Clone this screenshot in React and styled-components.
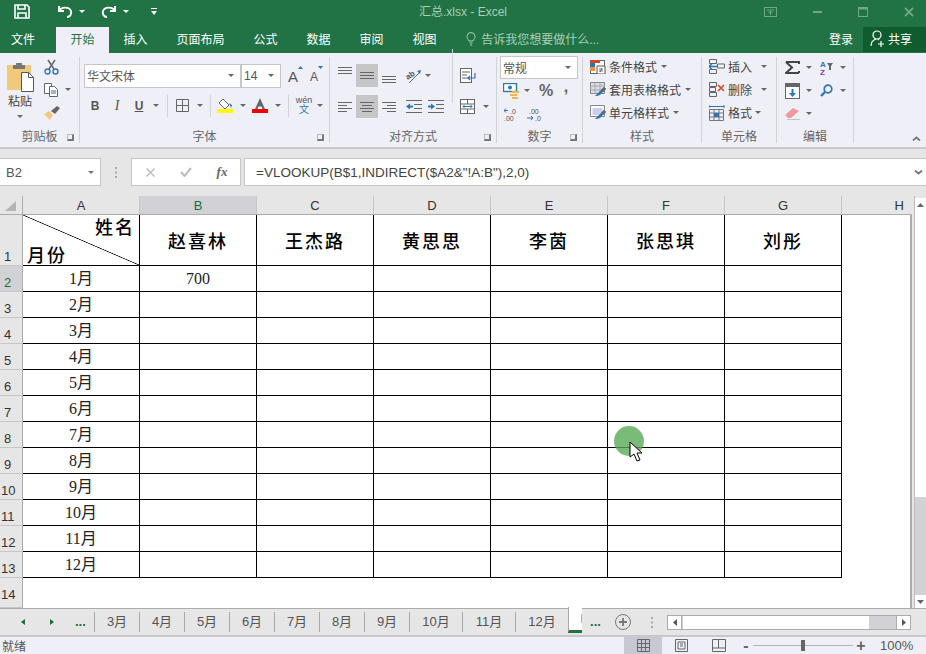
import React from "react";
import styled, { createGlobalStyle } from "styled-components";

const GlobalStyle = createGlobalStyle`
  html, body {
    margin: 0;
    padding: 0;
    background: #e6e6e6;
    overflow: hidden;
  }
  * {
    box-sizing: border-box;
  }
`;

const uiFont = `"Liberation Sans", "Noto Sans CJK SC", sans-serif`;
const cellFont = `"Liberation Serif", "Noto Sans CJK SC", serif`;

const Window = styled.div`
  position: relative;
  width: 926px;
  height: 654px;
  overflow: hidden;
  display: flex;
  flex-direction: column;
  background: #e6e6e6;
  color: #444;
  font-family: ${uiFont};
  font-size: 12px;
`;

/* title bar */
const TitleBar = styled.div`
  height: 27px;
  background: #217346;
  display: grid;
  grid-template-columns: 1fr auto 1fr;
  align-items: center;
`;

const QuickAccess = styled.div`
  display: flex;
  align-items: center;
  padding: 0 0 9px 14px;
`;

const DocTitle = styled.div`
  color: #a9cfb7;
  font-size: 12px;
  padding-bottom: 10px;
  margin-top: -2px;
`;

const WindowControls = styled.div`
  display: flex;
  align-items: center;
  justify-content: flex-end;
  padding: 0 12px 9px 0;
  gap: 36px;
`;

/* menu tabs */
const TabRow = styled.div`
  height: 26px;
  background: #217346;
  display: flex;
  align-items: stretch;
  color: #fff;
`;

const MenuTab = styled.div`
  display: flex;
  align-items: center;
  padding: ${props => (props.$first ? "0 21px 3px 11px" : "0 14.5px 3px")};
  background: ${props => (props.$active ? "#eff0f7" : "transparent")};
  color: ${props => (props.$active ? "#217346" : "#fff")};
`;

const TellMe = styled.div`
  display: flex;
  align-items: center;
  gap: 5px;
  margin-left: 15px;
  padding-bottom: 3px;
  color: #a9cfb7;
`;

const SignIn = styled.div`
  margin-left: auto;
  display: flex;
  align-items: center;
  padding: 0 10px 3px 0;
`;

const ShareButton = styled.div`
  width: 63px;
  display: flex;
  align-items: center;
  gap: 3px;
  padding: 0 0 2px 7px;
  margin-bottom: 1px;
  background: #0f5c2e;
`;

/* ribbon */
const Ribbon = styled.div`
  height: 96px;
  padding: 4px 0 4px;
  background: #eff0f7;
  border-bottom: 2px solid #c8c8c8;
  display: flex;
`;

const Group = styled.div`
  width: ${props => props.$w}px;
  height: 86px;
  flex: none;
  display: flex;
  flex-direction: column;
  border-right: 1px solid #d2d2d8;
`;

const GroupBody = styled.div`
  height: 69px;
  display: ${props => (props.$row ? "flex" : "block")};
  padding: ${props => props.$pad || "0"};
  margin-top: ${props => (props.$up ? -props.$up : 0)}px;
  margin-bottom: ${props => props.$up || 0}px;
`;

const GroupFooter = styled.div`
  height: 17px;
  display: grid;
  grid-template-columns: 14px 1fr 14px;
  align-items: center;
  justify-items: center;
  color: #666;
  padding-top: 1px;
`;

const Launcher = styled.span`
  width: 7px;
  height: 7px;
  margin: 3px 4px 0 0;
  border-left: 1px solid #bbb;
  border-top: 1px solid #bbb;
  border-right: 2px solid #777;
  border-bottom: 2px solid #777;
`;

const ToolRow = styled.div`
  display: flex;
  align-items: center;
  height: ${props => props.$h || 23}px;
  margin-top: ${props => props.$mt || 0}px;
`;

const Spot = styled.div`
  width: ${props => props.$w}px;
  height: 23px;
  margin-left: ${props => props.$ml || 0}px;
  flex: none;
  display: flex;
  align-items: ${props => props.$align || "center"};
  justify-content: center;
  padding: ${props => props.$pad || "0"};
  background: ${props => (props.$on ? "#c6c6c6" : "transparent")};
  color: #555;
`;

const Arrow = styled.span`
  display: block;
  width: 0;
  height: 0;
  flex: none;
  border-left: 3px solid transparent;
  border-right: 3px solid transparent;
  border-top: 3px solid ${props => props.$c || "#666"};
  margin-left: ${props => props.$ml || 0}px;
`;

const ToolSep = styled.span`
  width: 1px;
  height: ${props => props.$h || 22}px;
  margin: 0 ${props => props.$mr || 0}px 0 ${props => props.$ml || 0}px;
  background: #d2d2d8;
  flex: none;
`;

const ComboBox = styled.div`
  width: ${props => props.$w}px;
  height: ${props => props.$h || 24}px;
  flex: none;
  background: #fff;
  border: 1px solid #c6c6c6;
  display: flex;
  align-items: center;
  justify-content: space-between;
  padding: 0 6px 0 2px;
  color: #555;
`;

const FontStep = styled.div`
  display: flex;
  align-items: flex-start;
  margin-left: ${props => props.$ml}px;
  width: ${props => props.$w}px;
  flex: none;
`;

const FontStepLetter = styled.span`
  font-size: ${props => props.$size}px;
  line-height: 16px;
  color: #555;
  margin-top: 3px;
`;

const PasteColumn = styled.div`
  width: 37px;
  padding: 5px 0 0 7px;
  display: flex;
  flex-direction: column;
  align-items: flex-start;
  color: #444;
`;

const PasteLabel = styled.div`
  margin: 2px 0 0 1px;
  line-height: 16px;
`;

const PasteArrow = styled.div`
  display: flex;
  margin: 5px 0 0 10px;
`;

const SmallColumn = styled.div`
  display: flex;
  flex-direction: column;
  margin-top: -2px;
`;

const SmallRow = styled.div`
  height: 23px;
  display: flex;
  align-items: center;
  padding-left: 7px;
`;

const LabelRow = styled.div`
  height: 23px;
  display: flex;
  align-items: center;
  gap: 3px;
  color: #444;
  white-space: nowrap;
`;

const AlignBlock = styled.div`
  display: flex;
  flex-direction: column;
  gap: 8px;
  padding-top: 7px;
`;

const AlignSide = styled.div`
  display: flex;
  flex-direction: column;
  gap: 8px;
  padding: 7px 0 0 1px;
`;

const Collapse = styled.div`
  flex: 1;
  display: flex;
  justify-content: flex-end;
  align-items: flex-end;
  padding: 0 5px 2px 0;
`;

const WenLabel = styled.div`
  font-size: 9px;
  line-height: 9px;
  text-align: center;
  color: #555;
`;

const WenChar = styled.span`
  color: #2f75b5;
  font-size: 10px;
`;

const PercentLabel = styled.span`
  font-size: 16px;
  font-weight: 700;
  color: #666;
  margin-bottom: ${props => props.$mb || 0}px;
`;

/* formula bar */
const FormulaBar = styled.div`
  height: 28px;
  margin-top: 9px;
  display: flex;
  align-items: stretch;
`;

const NameBox = styled.div`
  width: 101px;
  background: #fff;
  border: 1px solid #c6c6c6;
  border-left: 0;
  display: flex;
  align-items: center;
  justify-content: space-between;
  padding: 0 6px;
  color: #555;
  font-size: 13px;
`;

const Grip = styled.div`
  width: 30px;
  display: flex;
  align-items: center;
  justify-content: center;
`;

const FxBox = styled.div`
  width: 110px;
  background: #fff;
  border: 1px solid #c6c6c6;
  display: grid;
  grid-template-columns: 36px 36px 36px;
  align-items: center;
  justify-items: center;
`;

const FxLabel = styled.span`
  font-family: ${cellFont};
  font-style: italic;
  font-weight: 700;
  font-size: 13px;
  color: #666;
`;

const FormulaInput = styled.div`
  flex: 1;
  margin-left: 3px;
  background: #fff;
  border: 1px solid #c6c6c6;
  border-right: 0;
  display: flex;
  align-items: center;
  justify-content: space-between;
  padding: 0 3px 0 11px;
  color: #444;
  font-size: 13.5px;
`;

/* sheet */
const SheetArea = styled.div`
  height: 412px;
  margin-top: 10px;
  display: flex;
`;

const Grid = styled.div`
  width: 912px;
  display: grid;
  grid-template-columns: 23px repeat(7, 117px) 70px;
  grid-template-rows: 19px 51px repeat(12, 26px) 30px;
  overflow: hidden;
`;

const Corner = styled.div`
  background: #e6e6e6;
  border-right: 1px solid #ababab;
  border-bottom: 1px solid #ababab;
  display: flex;
  justify-content: center;
  align-items: flex-end;
  padding: 0 2px 3px 0;
`;

const ColHead = styled.div`
  display: flex;
  align-items: center;
  justify-content: ${props => (props.$edge ? "flex-end" : "center")};
  padding-right: ${props => (props.$edge ? "7px" : "0")};
  background: ${props => (props.$on ? "#d2d2d6" : "#e6e6e6")};
  color: ${props => (props.$on ? "#1d6b41" : "#333")};
  border-right: 1px solid ${props => (props.$edge ? "transparent" : "#c6c6c6")};
  border-bottom: 1px solid #ababab;
  font-size: 13px;
`;

const RowHead = styled.div`
  display: flex;
  align-items: flex-end;
  padding: 0 0 ${props => (props.$last ? "4px" : "0")} ${props => (props.$wide ? "1px" : "4px")};
  background: ${props => (props.$on ? "#d2d2d6" : "#e6e6e6")};
  color: ${props => (props.$on ? "#1d6b41" : "#333")};
  border-right: 1px solid #ababab;
  border-bottom: 1px solid #c6c6c6;
  font-size: 13px;
  line-height: 16px;
`;

const Cell = styled.div`
  background: #fff;
  border-right: 1px solid #000;
  border-bottom: 1px solid #000;
  display: flex;
  align-items: center;
  justify-content: center;
  color: #222;
  font-family: ${cellFont};
  font-size: 16px;
`;

const MonthCell = styled(Cell)`
  padding-bottom: 3px;
`;

const NameCell = styled(Cell)`
  padding-bottom: 1px;
  font-size: 18px;
  font-weight: 500;
  letter-spacing: 2px;
  color: #000;
`;

const DiagonalCell = styled(Cell)`
  flex-direction: column;
  align-items: stretch;
  justify-content: space-between;
  padding: 1px 6px 0 4px;
  font-size: 18px;
  font-weight: 500;
  letter-spacing: 2px;
  line-height: 24px;
  color: #000;
  background: linear-gradient(
    to top right,
    #fff calc(50% - 0.7px),
    #000 50%,
    #fff calc(50% + 0.7px)
  );
`;

const NameLabel = styled.span`
  text-align: right;
  margin-right: -2px;
`;

const MonthLabel = styled.span`
  margin-bottom: -3px;
`;

const EmptyCell = styled.div`
  background: #fff;
  border-right: ${props => (props.$edge ? "2px solid #ababab" : "0")};
`;

const VScroll = styled.div`
  width: 12px;
  margin-left: 2px;
  padding-top: 2px;
  display: flex;
  flex-direction: column;
  border-left: 1px solid #bdbdbd;
`;

const ScrollButton = styled.div`
  height: ${props => props.$h}px;
  background: #fff;
  display: flex;
  align-items: center;
  justify-content: center;
`;

const ScrollThumb = styled.div`
  height: ${props => props.$h}px;
  background: ${props => props.$c};
`;

/* sheet tabs */
const TabStrip = styled.div`
  height: 29px;
  border-top: 1px solid #ababab;
  border-bottom: 2px solid #c8c8c8;
  display: flex;
  align-items: center;
  background: #e6e6e6;
`;

const NavArea = styled.div`
  width: 94px;
  flex: none;
  display: flex;
  align-items: center;
  padding-left: 21px;
`;

const NavGap = styled.span`
  width: ${props => props.$w}px;
  flex: none;
`;

const Dots = styled.span`
  color: #1b6b3a;
  font-weight: 700;
  font-size: 13px;
  line-height: 12px;
`;

const SheetTab = styled.div`
  width: ${props => props.$w}px;
  height: 20px;
  flex: none;
  border-left: 1px solid #a8a8a8;
  display: flex;
  align-items: center;
  justify-content: center;
  padding-bottom: 3px;
  color: #555;
  font-size: 13px;
`;

const ActiveTab = styled.div`
  width: 14px;
  height: 26px;
  margin-top: -2px;
  flex: none;
  align-self: flex-start;
  border-left: 1px solid #a8a8a8;
  border-bottom: 3px solid #217346;
  background: #fff;
  display: flex;
  justify-content: flex-end;
  align-items: center;
`;

/* the active tab's label is clipped to a sliver in the picture */
const TabSliver = styled.span`
  width: 1px;
  height: 9px;
  background: #d9b44a;
`;

const StripTools = styled.div`
  display: flex;
  align-items: center;
  width: 85px;
  flex: none;
`;

const HScroll = styled.div`
  width: 244px;
  height: 15px;
  flex: none;
  display: flex;
  border: 1px solid #ababab;
  background: #d2d2d6;
`;

const HButton = styled.div`
  width: 14px;
  background: #fff;
  display: flex;
  align-items: center;
  justify-content: center;
  border-${props => props.$side}: 1px solid #ababab;
`;

const HThumb = styled.div`
  width: 186px;
  background: #fff;
  margin-left: ${props => props.$ml}px;
`;

const HRest = styled.div`
  flex: 1;
`;

/* status bar */
const StatusBar = styled.div`
  height: 17px;
  background: #eff0f7;
  display: flex;
  align-items: center;
  padding-left: 2px;
  color: #555;
`;

const StatusText = styled.span`
  width: 622px;
  flex: none;
`;

const ViewButton = styled.div`
  width: 38px;
  height: 17px;
  flex: none;
  display: flex;
  align-items: center;
  justify-content: center;
  background: ${props => (props.$on ? "#c8c8d2" : "transparent")};
`;

const ZoomMark = styled.span`
  width: 14px;
  flex: none;
  margin-left: ${props => props.$ml || 0}px;
  text-align: center;
  font-size: 16px;
  font-weight: 700;
  line-height: 16px;
  color: #666;
`;

const ZoomTrack = styled.div`
  width: 100px;
  height: 1px;
  flex: none;
  background: #b5b5b5;
  display: flex;
  justify-content: center;
  align-items: center;
`;

const ZoomThumb = styled.span`
  width: 4px;
  height: 11px;
  flex: none;
  background: #666;
`;

const ZoomValue = styled.span`
  margin-left: 12px;
  font-size: 13px;
  color: #555;
`;

/* recording marker */
const ClickMark = styled.div`
  position: absolute;
  left: 614px;
  top: 426px;
  width: 30px;
  height: 30px;
  border-radius: 50%;
  background: rgba(84, 168, 84, 0.78);
`;

const Pointer = styled.svg`
  position: absolute;
  left: 629px;
  top: 441px;
`;

const IconSvg = styled.svg`
  display: block;
  flex: none;
`;

const icons = {
  save: [16, 15, <g fill="none" stroke="#fff" strokeWidth="1.6"><path d="M1 1h12l2 2v11H1z" /><path d="M4 1v4h7V1M4 14V9h8v5" /></g>],
  undo: [16, 13, <g fill="none" stroke="#fff" strokeWidth="1.9"><path d="M2 6c2-4 10-5 12 0 1 3-1 6-4 6" /><path d="M2 1v5h5" /></g>],
  redo: [16, 13, <g fill="none" stroke="#fff" strokeWidth="1.9"><path d="M14 6c-2-4-10-5-12 0-1 3 1 6 4 6" /><path d="M14 1v5H9" /></g>],
  qat: [6, 8, <g fill="#fff"><rect width="6" height="1" /><path d="M0 3h6L3 7z" /></g>],
  pin: [13, 10, <g fill="none" stroke="#6ea884"><rect x=".5" y=".5" width="12" height="9" /><path d="M3 3h7M6.500 8V4M4.500 6l2-2 2 2" /></g>],
  minimize: [9, 2, <rect width="9" height="2" fill="#6ea884" />],
  restore: [10, 10, <g fill="none" stroke="#6ea884"><rect x=".5" y=".5" width="9" height="9" /><path d="M0 1.500h10" strokeWidth="2" /></g>],
  close: [10, 10, <path d="M1 1l8 8M9 1L1 9" stroke="#6ea884" strokeWidth="1.8" />],
  bulb: [10, 14, <g fill="none" stroke="#a9cfb7"><path d="M3 9C2 7 1 6.500 1 4.500a4 4 0 0 1 8 0C9 6.500 8 7 7 9z" /><path d="M3.500 11h3M4 13h2" /></g>],
  user: [15, 17, <g fill="none" stroke="#fff" strokeWidth="1.2"><circle cx="7" cy="5" r="4" /><path d="M1 16c0-4 2-6 5-7M8 9l1 1M11 11v6M8 14h6" /></g>],
  paste: [27, 30, <g><rect y="3" width="24" height="25" fill="#f1c97c" /><path d="M6 3h12v4H6zM9 1h6v3H9z" fill="#777" /><path d="M14.500 10.500h7l5 5v14h-12z" fill="#fff" stroke="#555" /><path d="M21.500 10.500v5h5" fill="none" stroke="#555" /></g>],
  cut: [15, 16, <g fill="none"><path d="M4 1l6 9M11 1L5 10" stroke="#666" strokeWidth="1.5" /><circle cx="3.500" cy="12.500" r="2.500" stroke="#2f75b5" strokeWidth="1.4" /><circle cx="11.500" cy="12.500" r="2.500" stroke="#2f75b5" strokeWidth="1.4" /></g>],
  copy: [15, 14, <g fill="#fff" stroke="#666"><path d="M.5.500h7v10h-7z" /><path d="M5.500 3.500h5l3 3v7h-8z" /><path d="M7 8h5M7 10h5" fill="none" stroke="#2f75b5" /></g>],
  brush: [16, 14, <g><path d="M0 8l5-3 4 4-3 5z" fill="#f1c97c" /><path d="M7 5l6-5 3 2-5 6z" fill="#666" /></g>],
  raise: [5, 3, <path d="M0 3l2.500-3L5 3z" fill="#2f75b5" />],
  lower: [5, 3, <path d="M0 0h5L2.500 3z" fill="#2f75b5" />],
  borders: [13, 13, <path d="M.5.500h12v12H.5zM6.500.500v12M.5 6.500h12" fill="none" stroke="#666" />],
  fill: [16, 15, <g><path d="M6 1l6 6-4 4-6-6z" fill="#fff" stroke="#666" /><path d="M12 5l3 2-1 3z" fill="#2f75b5" /><rect y="11" width="16" height="4" fill="#ffff00" /></g>],
  fontColor: [16, 15, <g><path d="M8 0l5 11h-2.500l-1-2.500h-3L5.500 11H3z" fill="#5f6b6b" /><rect y="11" width="16" height="4" fill="#f00000" /></g>],
  alignLines: [14, 7, <path d="M0 .5h14M0 3.500h14M0 6.500h14" stroke="#666" />],
  alignLeft: [14, 10, <path d="M0 .5h14M0 3.500h9M0 6.500h14M0 9.500h9" stroke="#666" />],
  alignCenter: [14, 10, <path d="M0 .5h14M2 3.500h10M0 6.500h14M2 9.500h10" stroke="#666" />],
  alignRight: [14, 10, <path d="M0 .5h14M5 3.500h9M0 6.500h14M5 9.500h9" stroke="#666" />],
  indentLess: [16, 13, <g><path d="M0 .5h16M8 4.500h8M8 8.500h8M0 12.500h16" stroke="#666" /><path d="M0 6.500l4-3v2h3v2H4v2z" fill="#2f75b5" /></g>],
  indentMore: [16, 13, <g><path d="M0 .5h16M8 4.500h8M8 8.500h8M0 12.500h16" stroke="#666" /><path d="M7 6.500l-4-3v2H0v2h3v2z" fill="#2f75b5" /></g>],
  orientation: [18, 16, <g><text x="1" y="10" fontFamily="Liberation Sans" fontSize="8" fontWeight="700" fill="#555" transform="rotate(-35 5 8)">ab</text><path d="M4 15L15 4" stroke="#666" /><path d="M16 2l-1 4-3-3z" fill="#2f75b5" /></g>],
  wrap: [16, 15, <g fill="none"><rect x=".5" y=".5" width="11" height="14" stroke="#666" fill="#fff" /><path d="M2 4h8M2 7h5M2 10h7" stroke="#666" /><path d="M15 5v5H8M10 8l-2 2 2 2" stroke="#2f75b5" strokeWidth="1.2" /></g>],
  merge: [15, 15, <g fill="#fff" stroke="#666"><rect x=".5" y=".5" width="14" height="14" /><path d="M.5 5h14M.5 10h14M7.500.5V5M7.500 10v4.500" /><path d="M3 7.500h9M4.500 6L3 7.500 4.500 9M10.500 6L12 7.500 10.500 9" stroke="#2f75b5" fill="none" /></g>],
  money: [17, 16, <g><rect x=".5" y=".5" width="13" height="8" fill="#fff" stroke="#2f75b5" strokeWidth="1.4" /><circle cx="7" cy="4.500" r="2" fill="#2f75b5" /><path d="M9 8h7v2H9zM7 11h7v2H7zM9 14h6v2H9z" fill="#e9b94f" /></g>],
  incDecimal: [15, 15, <g><text x="6" y="7" fontFamily="Liberation Sans" fontSize="7" fill="#555">.0</text><text x="0" y="14" fontFamily="Liberation Sans" fontSize="7" fill="#555">.00</text><path d="M0 3.500h4M2 1.500l-2 2 2 2" stroke="#2f75b5" fill="none" /></g>],
  decDecimal: [15, 15, <g><text x="2" y="7" fontFamily="Liberation Sans" fontSize="7" fill="#555">.00</text><text x="8" y="14" fontFamily="Liberation Sans" fontSize="7" fill="#555">.0</text><path d="M0 11h6M4 9l2 2-2 2" stroke="#2f75b5" fill="none" /></g>],
  conditional: [16, 14, <g><rect x=".5" y=".5" width="14" height="13" fill="#fff" stroke="#666" /><path d="M0 0h10v3H0z" fill="#d24726" /><path d="M0 3h5v4H0z" fill="#2f75b5" /><path d="M0 7h5v4H0z" fill="#e9943a" /><path d="M7 6h8v8H7z" fill="#fff" stroke="#555" /><path d="M9 9h4M9 11h4M12 8l-2 4" stroke="#555" strokeWidth=".8" /></g>],
  tableFormat: [16, 15, <g><path d="M.5.500h14v11H.5z" fill="#dcdce4" stroke="#888" /><path d="M5 .5v11M10 .5v11M.5 4h14M.5 8h14" stroke="#aaa" /><path d="M5 14l6-6 3-3 2 2-6 6-3 1z" fill="#2f75b5" /><path d="M11 8l3-3 2 2-3 3z" fill="#666" /></g>],
  cellStyle: [16, 15, <g><path d="M.5.500h14v11H.5z" fill="#fff" stroke="#888" /><path d="M2.500 3h10v7h-10z" fill="#c9cfe6" /><path d="M5 14l6-6 3-3 2 2-6 6-3 1z" fill="#2f75b5" /><path d="M11 8l3-3 2 2-3 3z" fill="#666" /></g>],
  insertCell: [16, 15, <g fill="none" stroke="#666"><path d="M.5.500h7v4h-7zM.5 10.500h7v4h-7zM8.500 5h7v4h-7z" /><path d="M0 7.500h8" stroke="#2f75b5" strokeWidth="1.5" /><path d="M3 4.500l-3 3 3 3" stroke="#2f75b5" strokeWidth="1.5" /></g>],
  deleteCell: [16, 15, <g fill="none" stroke="#666"><path d="M.5.500h7v4h-7zM.5 10.500h7v4h-7zM.5 5.500h6v4h-6z" /><path d="M9 3l6 6M15 3L9 9" stroke="#d24726" strokeWidth="1.6" /></g>],
  formatCell: [16, 16, <g fill="none" stroke="#777"><path d="M.5 4.500h14v11H.5zM.5 8h14M.5 12h14M5 4.500v11M10 4.500v11" /><path d="M0 1.500h15M0 0v3M15 0v3" stroke="#2f75b5" /><rect x="5" y="8" width="5" height="4" fill="#2f75b5" stroke="none" /></g>],
  sigma: [15, 13, <path d="M1 1h13v2M14 12H1l6-5.500L1 1M14 10v2" fill="none" stroke="#444" strokeWidth="2" />],
  sortFilter: [13, 16, <g><text x="0" y="7" fontFamily="Liberation Sans" fontSize="8" fontWeight="700" fill="#2f75b5">A</text><text x="0" y="15" fontFamily="Liberation Sans" fontSize="8" fontWeight="700" fill="#7a3fa0">Z</text><path d="M7 3h6l-2 3v4H9V6z" fill="#666" /></g>],
  fillDown: [15, 16, <g><rect x=".5" y=".5" width="14" height="15" fill="#fff" stroke="#666" /><rect width="15" height="4" fill="#666" /><path d="M6.500 6h2v4H11l-3.500 4L4 10h2.500z" fill="#2f75b5" /></g>],
  find: [13, 13, <g fill="none" stroke="#2f75b5" strokeWidth="1.7"><circle cx="8" cy="5" r="3.800" /><path d="M5 8l-4 4" strokeWidth="2.400" /></g>],
  eraser: [15, 13, <g><path d="M0 8l8-7 6 3-8 7H3z" fill="#ef9aa0" /><path d="M2 13h13" stroke="#999" /></g>],
  chevronUp: [9, 5, <path d="M1 4.500l3.500-3 3.500 3" fill="none" stroke="#777" strokeWidth="1.800" />],
  chevronDown: [9, 5, <path d="M1 .5l3.500 3 3.500-3" fill="none" stroke="#777" strokeWidth="1.800" />],
  grip: [2, 11, <path d="M0 0h2v2H0zM0 4.500h2v2H0zM0 9h2v2H0z" fill="#aaa" />],
  cancel: [9, 9, <path d="M.5.500l8 8M8.500.500l-8 8" stroke="#bdbdbd" strokeWidth="1.500" />],
  enter: [12, 10, <path d="M1 5l3.500 4L11 1" fill="none" stroke="#bdbdbd" strokeWidth="2" />],
  cornerMark: [11, 10, <path d="M11 0v10H0z" fill="#b5b5b5" />],
  triangleUp: [7, 4, <path d="M0 4l3.500-4L7 4z" fill="#666" />],
  triangleDown: [7, 4, <path d="M0 0l3.500 4L7 0z" fill="#666" />],
  navLeft: [4, 6, <path d="M4 0v6L0 3z" fill="#1b6b3a" />],
  navRight: [4, 6, <path d="M0 0v6l4-3z" fill="#1b6b3a" />],
  scrollLeft: [4, 7, <path d="M4 0v7L0 3.500z" fill="#555" />],
  scrollRight: [4, 7, <path d="M0 0v7l4-3.500z" fill="#555" />],
  addSheet: [16, 16, <g fill="none" stroke="#777"><circle cx="8" cy="8" r="7.500" /><path d="M4 8h8M8 4v8" strokeWidth="1.800" /></g>],
  normalView: [13, 13, <path d="M.5.500h12v12H.5zM4.500.500v12M8.500.500v12M.5 4.500h12M.5 8.500h12" fill="none" stroke="#666" />],
  layoutView: [13, 13, <path d="M.5.500h12v12H.5zM3 3h7v7H3zM5 5h3M5 7h3" fill="none" stroke="#666" />],
  breakView: [14, 13, <path d="M.5 12.500V.5h13v12zM.5 9h6V.5M6.500 9h7" fill="none" stroke="#666" />],
};

const Icon = ({ name }) => {
  const [w, h, body] = icons[name];
  return (
    <IconSvg width={w} height={h} viewBox={`0 0 ${w} ${h}`}>
      {body}
    </IconSvg>
  );
};

const Drop = ({ w = 7, ml }) => (
  <Spot $w={w} $ml={ml}>
    <Arrow />
  </Spot>
);

const Footer = ({ label, launcher }) => (
  <GroupFooter>
    <span />
    <span>{label}</span>
    {launcher ? <Launcher /> : <span />}
  </GroupFooter>
);

const menuTabs = ["开始", "插入", "页面布局", "公式", "数据", "审阅", "视图"];
const columns = ["B", "C", "D", "E", "F", "G"];
const people = ["赵喜林", "王杰路", "黄思思", "李茵", "张思琪", "刘彤"];
const months = ["1月", "2月", "3月", "4月", "5月", "6月", "7月", "8月", "9月", "10月", "11月", "12月"];
const sheets = [
  ["3月", 45], ["4月", 45], ["5月", 45], ["6月", 45], ["7月", 45], ["8月", 45],
  ["9月", 45], ["10月", 53], ["11月", 53], ["12月", 53]
];

function Ribbons() {
  return (
    <Ribbon>
      <Group $w={80}>
        <GroupBody $row>
          <PasteColumn>
            <Icon name="paste" />
            <PasteLabel>粘贴</PasteLabel>
            <PasteArrow><Arrow /></PasteArrow>
          </PasteColumn>
          <SmallColumn>
            <SmallRow><Icon name="cut" /></SmallRow>
            <SmallRow><Icon name="copy" /><Arrow $ml={6} /></SmallRow>
            <SmallRow><Icon name="brush" /></SmallRow>
          </SmallColumn>
        </GroupBody>
        <Footer label="剪贴板" launcher />
      </Group>

      <Group $w={250}>
        <GroupBody $pad="7px 0 0 4px">
          <ToolRow>
            <ComboBox $w={157}><span>华文宋体</span><Arrow /></ComboBox>
            <ComboBox $w={40}><span>14</span><Arrow /></ComboBox>
            <FontStep $ml={7} $w={22}>
              <FontStepLetter $size={15}>A</FontStepLetter>
              <Icon name="raise" />
            </FontStep>
            <FontStep $ml={0} $w={14}>
              <FontStepLetter $size={12}>A</FontStepLetter>
              <Icon name="lower" />
            </FontStep>
          </ToolRow>
          <ToolRow $mt={7}>
            <Spot $w={22}><b>B</b></Spot>
            <Spot $w={22}><i style={{ fontFamily: "Liberation Serif", fontSize: 14 }}>I</i></Spot>
            <Spot $w={22}><u><b>U</b></u></Spot>
            <Drop w={12} />
            <ToolSep $ml={5} />
            <Spot $w={28}><Icon name="borders" /></Spot>
            <Drop w={8} />
            <ToolSep $ml={6} />
            <Spot $w={28}><Icon name="fill" /></Spot>
            <Drop />
            <Spot $w={28}><Icon name="fontColor" /></Spot>
            <Drop />
            <ToolSep $ml={7} />
            <Spot $w={24} $ml={3}>
              <WenLabel>wén<br /><WenChar>文</WenChar></WenLabel>
            </Spot>
            <Drop w={8} />
          </ToolRow>
        </GroupBody>
        <Footer label="字体" launcher />
      </Group>

      <Group $w={167}>
        <GroupBody $row $pad="0 0 0 4px">
          <AlignBlock>
            <ToolRow>
              <Spot $w={22} $align="flex-start" $pad="3px 0 0"><Icon name="alignLines" /></Spot>
              <Spot $w={22} $on><Icon name="alignLines" /></Spot>
              <Spot $w={22} $align="flex-end" $pad="0 0 4px"><Icon name="alignLines" /></Spot>
              <Spot $w={22} $ml={3}><Icon name="orientation" /></Spot>
              <Drop w={6} />
            </ToolRow>
            <ToolRow>
              <Spot $w={22}><Icon name="alignLeft" /></Spot>
              <Spot $w={22} $on><Icon name="alignCenter" /></Spot>
              <Spot $w={22}><Icon name="alignRight" /></Spot>
              <Spot $w={22} $ml={3}><Icon name="indentLess" /></Spot>
              <Spot $w={22}><Icon name="indentMore" /></Spot>
            </ToolRow>
          </AlignBlock>
          <AlignSide>
            <ToolRow>
              <ToolSep $ml={4} $h={54} />
              <Spot $w={29}><Icon name="wrap" /></Spot>
            </ToolRow>
            <ToolRow>
              <Spot $w={29} $ml={5}><Icon name="merge" /></Spot>
              <Drop w={6} ml={1} />
            </ToolRow>
          </AlignSide>
        </GroupBody>
        <Footer label="对齐方式" launcher />
      </Group>

      <Group $w={86}>
        <GroupBody $pad="0 0 0 3px" $up={1}>
          <ComboBox $w={78} $h={23}><span>常规</span><Arrow /></ComboBox>
          <ToolRow>
            <Spot $w={22}><Icon name="money" /></Spot>
            <Drop w={10} />
            <Spot $w={28}><PercentLabel>%</PercentLabel></Spot>
            <Spot $w={12}><PercentLabel $mb={8}>,</PercentLabel></Spot>
          </ToolRow>
          <ToolRow $mt={1}>
            <Spot $w={22}><Icon name="incDecimal" /></Spot>
            <Spot $w={24}><Icon name="decDecimal" /></Spot>
          </ToolRow>
        </GroupBody>
        <Footer label="数字" launcher />
      </Group>

      <Group $w={119}>
        <GroupBody $pad="0 0 0 7px" $up={2}>
          <LabelRow><Icon name="conditional" />条件格式<Arrow $ml={1} /></LabelRow>
          <LabelRow><Icon name="tableFormat" />套用表格格式<Arrow $ml={1} /></LabelRow>
          <LabelRow><Icon name="cellStyle" />单元格样式<Arrow $ml={1} /></LabelRow>
        </GroupBody>
        <Footer label="样式" />
      </Group>

      <Group $w={75}>
        <GroupBody $pad="0 0 0 7px" $up={2}>
          <LabelRow><Icon name="insertCell" />插入<Arrow $ml={6} /></LabelRow>
          <LabelRow><Icon name="deleteCell" />删除<Arrow $ml={6} /></LabelRow>
          <LabelRow><Icon name="formatCell" />格式<Arrow /></LabelRow>
        </GroupBody>
        <Footer label="单元格" />
      </Group>

      <Group $w={77}>
        <GroupBody $pad="0 0 0 1px" $up={1}>
          <ToolRow>
            <Spot $w={28}><Icon name="sigma" /></Spot>
            <Drop w={6} />
            <Spot $w={28}><Icon name="sortFilter" /></Spot>
            <Drop w={6} />
          </ToolRow>
          <ToolRow>
            <Spot $w={28}><Icon name="fillDown" /></Spot>
            <Drop w={6} />
            <Spot $w={28}><Icon name="find" /></Spot>
            <Drop w={6} />
          </ToolRow>
          <ToolRow>
            <Spot $w={28}><Icon name="eraser" /></Spot>
            <Drop w={6} />
          </ToolRow>
        </GroupBody>
        <Footer label="编辑" />
      </Group>

      <Collapse><Icon name="chevronUp" /></Collapse>
    </Ribbon>
  );
}

function Sheet() {
  return (
    <SheetArea>
      <Grid>
        <Corner><Icon name="cornerMark" /></Corner>
        <ColHead>A</ColHead>
        {columns.map(col => (
          <ColHead key={col} $on={col === "B"}>{col}</ColHead>
        ))}
        <ColHead $edge>H</ColHead>

        <RowHead>1</RowHead>
        <DiagonalCell>
          <NameLabel>姓名</NameLabel>
          <MonthLabel>月份</MonthLabel>
        </DiagonalCell>
        {people.map(name => (
          <NameCell key={name}>{name}</NameCell>
        ))}
        <EmptyCell $edge />

        {months.map((month, i) => (
          <React.Fragment key={month}>
            <RowHead $on={i === 0} $wide={i > 7}>{i + 2}</RowHead>
            <MonthCell>{month}</MonthCell>
            {columns.map(col => (
              <Cell key={col}>{i === 0 && col === "B" ? "700" : ""}</Cell>
            ))}
            <EmptyCell $edge />
          </React.Fragment>
        ))}

        <RowHead $wide $last>14</RowHead>
        {[...Array(7)].map((_, i) => (
          <EmptyCell key={i} />
        ))}
        <EmptyCell $edge />
      </Grid>
      <VScroll>
        <ScrollButton $h={14}><Icon name="triangleUp" /></ScrollButton>
        <ScrollThumb $h={285} $c="#fff" />
        <ScrollThumb $h={98} $c="#d2d2d6" />
        <ScrollButton $h={13}><Icon name="triangleDown" /></ScrollButton>
      </VScroll>
    </SheetArea>
  );
}

export default function App() {
  return (
    <Window>
      <GlobalStyle />
      <TitleBar>
        <QuickAccess>
          <Icon name="save" />
          <Spot $w={16} $ml={27}><Icon name="undo" /></Spot>
          <Spot $w={18}><Arrow $c="#fff" /></Spot>
          <Spot $w={16} $ml={10}><Icon name="redo" /></Spot>
          <Spot $w={18}><Arrow $c="#fff" /></Spot>
          <Spot $w={6} $ml={16}><Icon name="qat" /></Spot>
        </QuickAccess>
        <DocTitle>汇总.xlsx - Excel</DocTitle>
        <WindowControls>
          <Icon name="pin" />
          <Icon name="minimize" />
          <Icon name="restore" />
          <Icon name="close" />
        </WindowControls>
      </TitleBar>

      <TabRow>
        <MenuTab $first>文件</MenuTab>
        {menuTabs.map(tab => (
          <MenuTab key={tab} $active={tab === "开始"}>{tab}</MenuTab>
        ))}
        <TellMe>
          <Icon name="bulb" />
          告诉我您想要做什么...
        </TellMe>
        <SignIn>登录</SignIn>
        <ShareButton>
          <Icon name="user" />
          共享
        </ShareButton>
      </TabRow>

      <Ribbons />

      <FormulaBar>
        <NameBox>B2<Arrow $c="#777" /></NameBox>
        <Grip><Icon name="grip" /></Grip>
        <FxBox>
          <Icon name="cancel" />
          <Icon name="enter" />
          <FxLabel>fx</FxLabel>
        </FxBox>
        <FormulaInput>
          =VLOOKUP(B$1,INDIRECT($A2&"!A:B"),2,0)
          <Icon name="chevronDown" />
        </FormulaInput>
      </FormulaBar>

      <Sheet />

      <TabStrip>
        <NavArea>
          <Icon name="navLeft" />
          <NavGap $w={25} />
          <Icon name="navRight" />
          <NavGap $w={21} />
          <Dots>...</Dots>
        </NavArea>
        {sheets.map(([label, width]) => (
          <SheetTab key={label} $w={width}>{label}</SheetTab>
        ))}
        <ActiveTab><TabSliver /></ActiveTab>
        <StripTools>
          <Spot $w={27}><Dots>...</Dots></Spot>
          <Spot $w={27}><Icon name="addSheet" /></Spot>
          <Spot $w={31}><Icon name="grip" /></Spot>
        </StripTools>
        <HScroll>
          <HButton $side="right"><Icon name="scrollLeft" /></HButton>
          <HThumb $ml={1} />
          <HRest />
          <HButton $side="left"><Icon name="scrollRight" /></HButton>
        </HScroll>
      </TabStrip>

      <StatusBar>
        <StatusText>就绪</StatusText>
        <ViewButton $on><Icon name="normalView" /></ViewButton>
        <ViewButton><Icon name="layoutView" /></ViewButton>
        <ViewButton><Icon name="breakView" /></ViewButton>
        <ZoomMark $ml={1}>-</ZoomMark>
        <ZoomTrack><ZoomThumb /></ZoomTrack>
        <ZoomMark $ml={1}>+</ZoomMark>
        <ZoomValue>100%</ZoomValue>
      </StatusBar>

      <ClickMark />
      <Pointer width="14" height="21" viewBox="0 0 14 21">
        <path d="M1 1v15l4-3 3 7 3-1-3-7h5z" fill="#fff" stroke="#000" />
      </Pointer>
    </Window>
  );
}
